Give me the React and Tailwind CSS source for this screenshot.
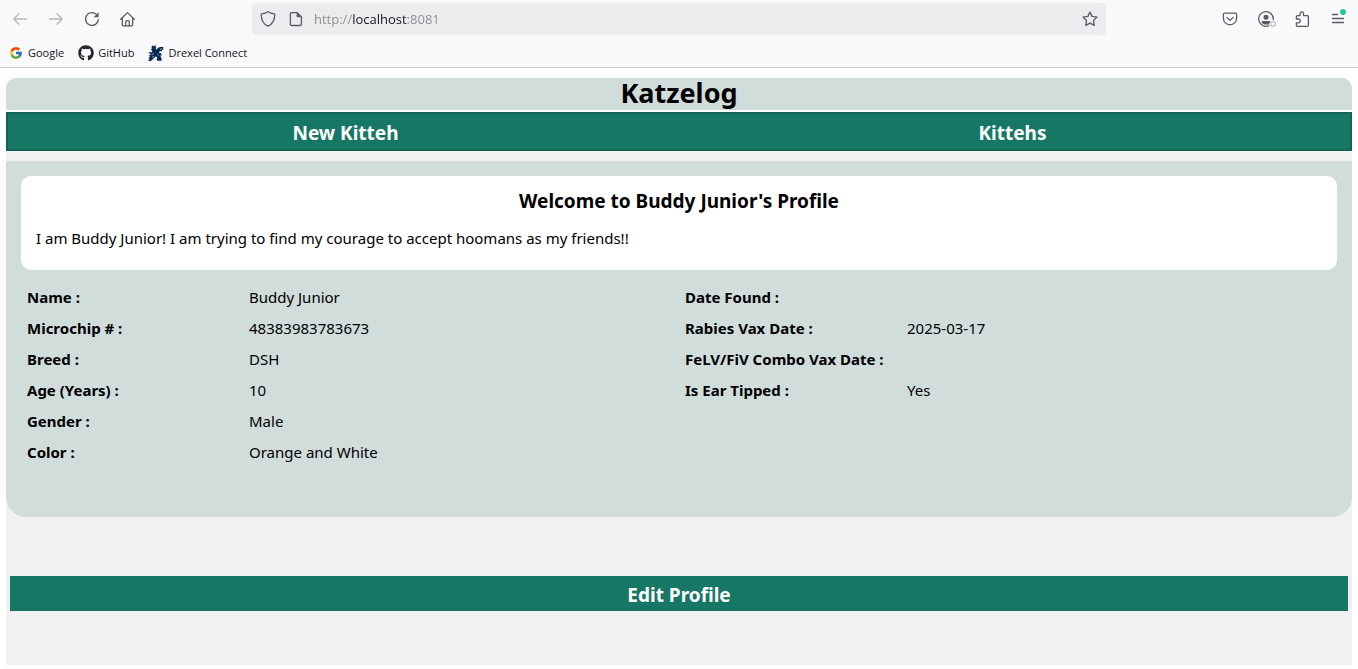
import React from "react";
import { FcGoogle } from "react-icons/fc";
import { FaGithub } from "react-icons/fa";

function Icon({ children, className = "" }) {
  return (
    <svg
      viewBox="0 0 16 16"
      className={`size-4 shrink-0 ${className}`}
      fill="none"
      stroke="currentColor"
      strokeWidth="1.3"
      strokeLinecap="round"
      strokeLinejoin="round"
      aria-hidden="true"
    >
      {children}
    </svg>
  );
}

const BackIcon = () => (
  <Icon>
    <path d="M14.5 8H1.8M7 2.8L1.8 8 7 13.2" />
  </Icon>
);

const ForwardIcon = () => (
  <Icon>
    <path d="M1.5 8h12.7M9 2.8L14.2 8 9 13.2" />
  </Icon>
);

const ReloadIcon = () => (
  <Icon>
    <path d="M14.3 8.6A6.4 6.4 0 1 1 12.4 3.4" />
    <path d="M14.6 1.2v5h-5z" fill="currentColor" stroke="none" />
  </Icon>
);

const HomeIcon = () => (
  <Icon>
    <path d="M.7 8.200L7.500 1.600l6.800 6.600M2.300 7v6.600a1.200 1.200 0 0 0 1.200 1.200h8a1.200 1.200 0 0 0 1.200-1.200V7" />
    <path d="M5.700 14.800v-4.200a1 1 0 0 1 1-1h1.600a1 1 0 0 1 1 1v4.200" />
  </Icon>
);

const ShieldIcon = () => (
  <Icon>
    <path d="M8 .8c1.9 1.1 4 1.8 6.1 2.1.4.1.7.4.7.8-.1 5.4-2 9.3-6.8 11.5C3.2 13 1.3 9.1 1.2 3.7c0-.4.3-.7.7-.8C4 2.6 6.1 1.900 8 .8z" />
  </Icon>
);

const PageIcon = () => (
  <Icon>
    <path d="M3.6 1.7h5.6l4.2 4.2v7.4a1.200 1.200 0 0 1-1.200 1.200H3.600a1.200 1.200 0 0 1-1.200-1.200V2.900a1.200 1.200 0 0 1 1.200-1.200z" />
    <path d="M8.600 1.400v3.800a1 1 0 0 0 1 1h4z" fill="currentColor" stroke="none" />
  </Icon>
);

const StarIcon = () => (
  <Icon>
    <path d="M8 1.100l2.100 4.300 4.900.7-3.500 3.400.8 4.900L8 12.100l-4.300 2.300.8-4.900L1 6.100l4.900-.7z" />
  </Icon>
);

const PocketIcon = () => (
  <Icon>
    <path d="M2.700 2.200h10.600a1.300 1.300 0 0 1 1.300 1.300v3.700a6.600 6.600 0 0 1-13.200 0V3.500a1.300 1.300 0 0 1 1.300-1.300z" />
    <path d="M4.800 6.400L8 9.400l3.200-3" />
  </Icon>
);

const AccountIcon = () => (
  <svg viewBox="0 0 20 16" className="ml-1 h-4 w-5 shrink-0" fill="none" aria-hidden="true">
    <path
      d="M10.800 14.700A7.300 7.300 0 1 1 15.300 8.400"
      stroke="currentColor"
      strokeWidth="1.300"
      strokeLinecap="round"
    />
    <circle cx="8" cy="6.200" r="2.500" fill="currentColor" />
    <path d="M3.600 10h8.400v1.600l-1 .9v1H6.200C4.800 13 3.600 11.800 3.600 10z" fill="currentColor" />
    <circle cx="15" cy="13" r="2.300" stroke="#b9b9be" strokeWidth="1.200" />
  </svg>
);

const PuzzleIcon = () => (
  <Icon>
    <path d="M2.400 8V5.600a1 1 0 0 1 1-1h2.700V2.600a1.700 1.700 0 0 1 3.400 0v2h3.900a1 1 0 0 1 1 1v8.700a1 1 0 0 1-1 1h-10a1 1 0 0 1-1-1v-2.400h1.900a1.900 1.900 0 0 0 0-3.900z" />
  </Icon>
);

const MenuIcon = () => (
  <Icon>
    <path d="M2.500 3.500h5M2.500 7.500h11M2.500 11.500h11" />
  </Icon>
);

const DragonIcon = () => (
  <svg viewBox="0 0 16 16" className="size-4 shrink-0" aria-hidden="true">
    <path
      fill="#0b2a52"
      d="M3.600 1.400L5.400 0l-.2 1.500L8.200.1 7.300 2l1.300.2-1 1.500 1 .9 1.300-1.700 2-.9 3.900-.1-1 1.400.9 1-1.500.8-.3 1.200-1.900-.2-1.300 1.300 2.300.9 1 2.200-1.300-.4-.2 1.400 1 1.300-.5.900.8.700-.2 1.300H9.200l-.6-1.700.8-1.700-1.700-.8-1.500 1.300-1.600 1.800L2.800 16H.2l1.200-1.500-1.100-.4 1.500-1.200L.3 12.500l1.900-1.300L.5 10.300l2.400-.6-1-1.200L.2 8l1.500-1.100 1.700.5.900-1.200-.9-1.500-1.100-.5 1.500-.5z"
    />
    <path
      fill="none"
      stroke="#f9f9fb"
      strokeWidth=".6"
      d="M12 4.300l1.900-.5M3.800 9.700l2-1.300M4 12.400l1.800-1.200M9.300 9.100l1.300 1.200"
    />
  </svg>
);

function ToolButton({ label, disabled, children }) {
  return (
    <button
      type="button"
      aria-label={label}
      disabled={disabled}
      className="relative flex h-8 w-9 items-center justify-center text-[#5b5b66] disabled:text-[#b7b7bd]"
    >
      {children}
    </button>
  );
}

function BrowserBar() {
  return (
    <header className="border-b border-[#cccccf] bg-[#f9f9fb] font-['Open_Sans',sans-serif]">
      <div className="flex items-center px-0.5 pt-[3px]">
        <div className="flex">
          <ToolButton label="Back" disabled>
            <BackIcon />
          </ToolButton>
          <ToolButton label="Forward" disabled>
            <ForwardIcon />
          </ToolButton>
          <ToolButton label="Reload">
            <ReloadIcon />
          </ToolButton>
          <ToolButton label="Home">
            <HomeIcon />
          </ToolButton>
        </div>
        <div className="mx-[106px] flex h-8 flex-1 items-center rounded bg-[#ececee] px-2 text-[#5b5b66]">
          <ShieldIcon />
          <span className="ml-3 flex">
            <PageIcon />
          </span>
          <input
            type="text"
            aria-label="Address"
            defaultValue="http://localhost:8081"
            className="ml-2.5 min-w-0 flex-1 bg-[linear-gradient(to_right,#8b8b90_39px,#15141a_39px,#15141a_93px,#8b8b90_93px)] bg-clip-text pt-0.5 text-[13px] text-transparent caret-black outline-none"
          />
          <button type="button" aria-label="Bookmark this page">
            <StarIcon />
          </button>
        </div>
        <div className="flex">
          <ToolButton label="Save to Pocket">
            <PocketIcon />
          </ToolButton>
          <ToolButton label="Account">
            <AccountIcon />
          </ToolButton>
          <ToolButton label="Extensions">
            <PuzzleIcon />
          </ToolButton>
          <ToolButton label="Menu">
            <MenuIcon />
            <span className="absolute top-1.5 right-2.5 size-1.5 rounded-full bg-[#2ac3a2]" />
          </ToolButton>
        </div>
      </div>
      <nav
        aria-label="Bookmarks"
        className="flex h-8 items-center gap-3.5 px-2 pt-1 text-[11px] text-[#15141a]"
      >
        <a href="#google" className="flex items-center gap-1">
          <FcGoogle className="size-4 p-px" aria-hidden="true" />
          Google
        </a>
        <a href="#github" className="flex items-center gap-1">
          <FaGithub className="size-4 text-[#24292f]" aria-hidden="true" />
          GitHub
        </a>
        <a href="#drexel" className="flex items-center gap-1">
          <DragonIcon />
          Drexel Connect
        </a>
      </nav>
    </header>
  );
}

const leftDetails = [
  ["Name :", "Buddy Junior"],
  ["Microchip # :", "48383983783673"],
  ["Breed :", "DSH"],
  ["Age (Years) :", "10"],
  ["Gender :", "Male"],
  ["Color :", "Orange and White"],
];

const rightDetails = [
  ["Date Found :", ""],
  ["Rabies Vax Date :", "2025-03-17"],
  ["FeLV/FiV Combo Vax Date :", ""],
  ["Is Ear Tipped :", "Yes"],
];

function Details({ rows }) {
  return (
    <dl className="flex-1 px-1.5">
      {rows.map(([label, value]) => (
        <div key={label} className="flex h-[31px] items-center">
          <dt className="w-[222px] shrink-0 font-bold whitespace-nowrap">{label}</dt>
          <dd>{value}</dd>
        </div>
      ))}
    </dl>
  );
}

export default function App() {
  return (
    <div className="min-h-screen bg-white">
      <BrowserBar />
      <div className="px-1.5 pt-2.5 pb-1 font-['Noto_Sans','Open_Sans',sans-serif] text-[15px] text-black">
        <h1 className="rounded-t-[10px] bg-[#d1dddb] pb-0.5 text-center text-[27px] leading-[30px] font-bold">
          Katzelog
        </h1>
        <nav
          aria-label="Main"
          className="mt-0.5 flex border-2 border-[#146356] bg-[#177765] px-1 pt-[3px] text-center text-[19px] leading-8 font-bold text-white"
        >
          <a href="#new" className="flex-1">
            New Kitteh
          </a>
          <a href="#kittehs" className="flex-1">
            Kittehs
          </a>
        </nav>
        <main className="bg-[#f1f1f1] pt-2.5 pb-[54px]">
          <section className="rounded-b-[20px] bg-[#d1dddb] px-[15px] pt-[15px] pb-[49px]">
            <div className="rounded-[10px] bg-white px-[15px] pt-2.5 pb-5">
              <h2 className="text-center text-[19px] leading-[30px] font-bold">
                Welcome to Buddy Junior's Profile
              </h2>
              <p className="mt-2.5 leading-6">
                I am Buddy Junior! I am trying to find my courage to accept hoomans as my friends!!
              </p>
            </div>
            <div className="mt-3 flex">
              <Details rows={leftDetails} />
              <Details rows={rightDetails} />
            </div>
          </section>
          <div className="mt-[59px] px-1">
            <button
              type="button"
              className="block w-full bg-[#177765] pt-[3px] text-center text-[19px] leading-8 font-bold text-white"
            >
              Edit Profile
            </button>
          </div>
        </main>
      </div>
    </div>
  );
}
